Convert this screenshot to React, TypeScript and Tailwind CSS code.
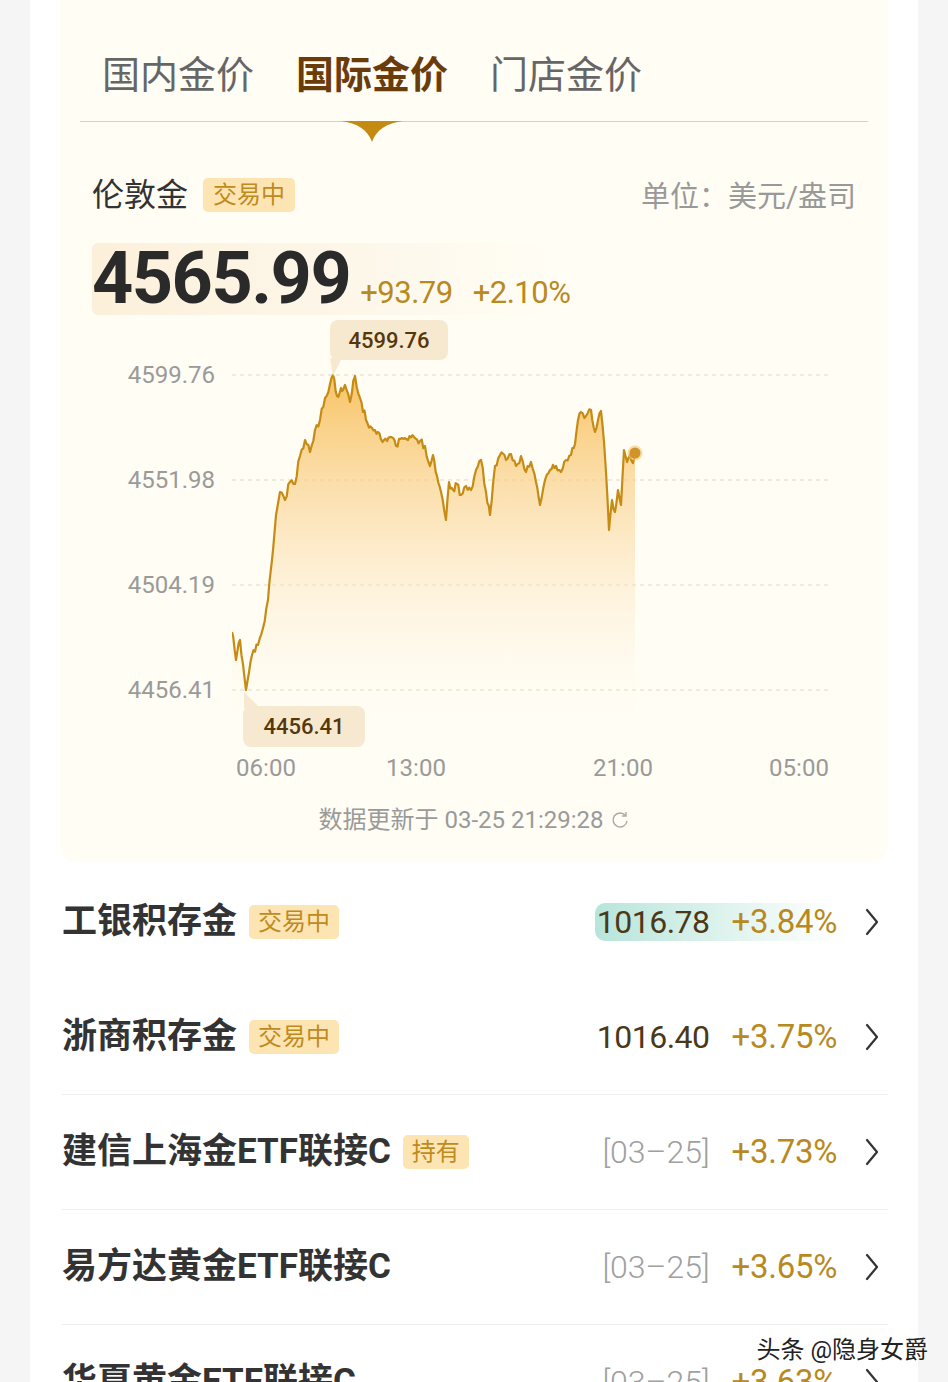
import React from "react";

const tabs = ["国内金价", "国际金价", "门店金价"];

interface Row {
  name: string;
  badge?: string;
  value?: string;
  date?: string;
  pct: string;
  hl?: boolean;
}

const rows: Row[] = [
  { name: "工银积存金", badge: "交易中", value: "1016.78", pct: "+3.84%", hl: true },
  { name: "浙商积存金", badge: "交易中", value: "1016.40", pct: "+3.75%" },
  { name: "建信上海金ETF联接C", badge: "持有", date: "[03–25]", pct: "+3.73%" },
  { name: "易方达黄金ETF联接C", date: "[03–25]", pct: "+3.65%" },
  { name: "华夏黄金ETF联接C", date: "[03–25]", pct: "+3.63%" },
];

// rough shape of the intraday line, in page coordinates
const keys: [number, number][] = [
  [232, 632], [236, 660], [240, 640], [246, 690], [252, 655], [258, 645], [263, 628],
  [268, 600], [272, 560], [276, 515], [280, 492], [285, 500], [290, 482], [295, 484],
  [300, 456], [305, 440], [310, 452], [315, 430], [320, 420], [325, 398], [330, 384],
  [333, 375], [337, 396], [341, 388], [345, 385], [350, 402], [355, 376], [360, 398],
  [366, 420], [372, 428], [378, 432], [384, 440], [390, 437], [396, 446], [402, 438],
  [408, 440], [414, 437], [420, 441], [425, 446], [430, 466], [433, 455], [437, 476],
  [441, 492], [446, 520], [449, 482], [453, 490], [457, 484], [461, 495], [466, 486],
  [471, 490], [476, 470], [481, 460], [486, 492], [490, 515], [495, 466], [500, 455],
  [506, 460], [511, 454], [516, 466], [521, 456], [526, 472], [531, 462], [536, 482],
  [540, 505], [545, 480], [550, 470], [556, 466], [561, 472], [566, 460], [571, 455],
  [575, 444], [578, 420], [581, 412], [586, 416], [591, 410], [595, 432], [598, 420],
  [601, 411], [604, 442], [606, 472], [609, 530], [612, 500], [615, 512], [618, 490],
  [621, 505], [624, 450], [627, 462], [630, 455], [633, 463], [635, 453],
];

function buildLine() {
  let seed = 11;
  const rnd = () => {
    seed = (seed * 16807) % 2147483647;
    return seed / 2147483647;
  };
  const pts: [number, number][] = [];
  for (let i = 0; i < keys.length - 1; i++) {
    const [x0, y0] = keys[i];
    const [x1, y1] = keys[i + 1];
    const steps = Math.max(1, Math.round((x1 - x0) / 1.5));
    for (let s = 0; s < steps; s++) {
      const t = s / steps;
      const j = s === 0 ? 0 : (rnd() - 0.5) * 8;
      const y = Math.min(690, Math.max(375, y0 + (y1 - y0) * t + j));
      pts.push([x0 + (x1 - x0) * t, y]);
    }
  }
  pts.push(keys[keys.length - 1]);
  return pts;
}

const linePts = buildLine();
const linePath = linePts.map((p, i) => `${i ? "L" : "M"}${p[0].toFixed(1)},${p[1].toFixed(1)}`).join(" ");
const areaPath = `${linePath} L635,720 L232,720 Z`;

const gridYs = [375, 480, 585, 690];

const Badge = ({ text }: { text: string }) => (
  <span className="ml-[12px] flex h-[34px] items-center rounded-[5px] bg-[#fde5b3] px-[9px] text-[24px] font-normal leading-none text-[#bf8a1e]">
    {text}
  </span>
);

const Chevron = () => (
  <svg width="16" height="30" viewBox="0 0 16 30" className="ml-[27px]">
    <path d="M3 3 L13 15 L3 27" fill="none" stroke="#333" strokeWidth="2.2" strokeLinecap="round" strokeLinejoin="round" />
  </svg>
);

export default function App() {
  return (
    <div className="relative h-[1382px] overflow-hidden bg-[#f5f5f5] font-['Roboto','Noto_Sans_CJK_SC',sans-serif]">
      <div className="mx-[30px] h-full bg-white">
        {/* gold panel */}
        <div className="mx-[30px] rounded-b-[16px] bg-[#fffdf4] pb-[28px]">
          <div className="px-[20px]">
            <div className="flex gap-[42px] border-b border-[#ddd3ad] pl-[22px] pt-[50px] pb-[21px]">
              {tabs.map((t, i) => (
                <div
                  key={t}
                  className={
                    i === 1
                      ? "relative text-[38px] font-bold leading-[50px] text-[#6b3c0b]"
                      : "relative text-[38px] leading-[50px] text-[#666]"
                  }
                >
                  {t}
                  {i === 1 && (
                    <svg
                      width="62"
                      height="22"
                      viewBox="0 0 62 22"
                      className="absolute left-1/2 top-[71px] -translate-x-1/2"
                    >
                      <path d="M0 0 H62 C46 2 35 9 31 21 C27 9 16 2 0 0 Z" fill="#c48a12" />
                    </svg>
                  )}
                </div>
              ))}
            </div>
          </div>

          <div className="px-[32px]">
            <div className="mt-[56px] flex h-[34px] items-center justify-between">
              <div className="flex items-center">
                <span className="text-[32px] leading-[34px] text-[#333]">伦敦金</span>
                <span className="ml-[15px] flex h-[34px] items-center rounded-[5px] bg-[#fde5b3] px-[10px] text-[24px] leading-none text-[#bf8a1e]">
                  交易中
                </span>
              </div>
              <span className="mt-[4px] text-[29px] leading-[34px] text-[#999]">单位：美元/盎司</span>
            </div>

            <div className="mt-[31px] flex h-[72px] w-[455px] items-baseline rounded-[6px] bg-linear-to-r from-[#fcf0da] via-[#fdf6e8] to-transparent">
              <span className="text-[72px] font-bold leading-[72px] tracking-[-1.5px] text-[#2a2a2a]">4565.99</span>
              <span className="ml-[10px] text-[31px] tracking-[-0.5px] text-[#b8891e]">+93.79</span>
              <span className="ml-[20px] text-[31px] tracking-[-0.5px] text-[#b8891e]">+2.10%</span>
            </div>

            {/* chart */}
            <div className="relative mt-[5px] flex h-[430px]">
              <div className="flex w-[123px] flex-col items-end gap-[75px] pt-[40px] text-[24px] leading-[30px] text-[#9a9a9a]">
                <span className="h-[30px]">4599.76</span>
                <span className="h-[30px]">4551.98</span>
                <span className="h-[30px]">4504.19</span>
                <span className="h-[30px]">4456.41</span>
              </div>
              <svg width="598" height="430" viewBox="232 320 598 430" className="ml-[17px]">
                <defs>
                  <linearGradient id="fill" x1="0" y1="375" x2="0" y2="720" gradientUnits="userSpaceOnUse">
                    <stop offset="0" stopColor="#f7bd55" stopOpacity="0.9" />
                    <stop offset="0.45" stopColor="#fbd9a0" stopOpacity="0.6" />
                    <stop offset="1" stopColor="#fff8ea" stopOpacity="0" />
                  </linearGradient>
                </defs>
                {gridYs.map((y) => (
                  <line key={y} x1="232" x2="830" y1={y} y2={y} stroke="#ece5d2" strokeWidth="1.5" strokeDasharray="4 4" />
                ))}
                <path d={areaPath} fill="url(#fill)" />
                <path d={linePath} fill="none" stroke="#c68b14" strokeWidth="2.2" strokeLinejoin="round" />
                <polygon points="330,358 342,358 333,376" fill="#f7e9cf" />
                <polygon points="244,692 244,708 260,708" fill="#f7e9cf" />
                <circle cx="635" cy="453" r="7.5" fill="#f3c877" opacity="0.6" />
                <circle cx="635" cy="453" r="5.5" fill="#cf952a" />
              </svg>
              <div className="absolute left-[238px] top-0 flex h-[40px] w-[118px] items-center justify-center rounded-[8px] bg-[#f7e9cf] text-[22px] font-medium text-[#55370c]">
                4599.76
              </div>
              <div className="absolute left-[151px] top-[386px] flex h-[41px] w-[122px] items-center justify-center rounded-[8px] bg-[#f7e9cf] text-[22px] font-medium text-[#55370c]">
                4456.41
              </div>
            </div>

            <div className="mt-[3px] flex h-[30px] pl-[140px] text-[24px] leading-[30px] text-[#9a9a9a]">
              <span className="ml-[2px] w-[64px] text-center">06:00</span>
              <span className="ml-[86px] w-[64px] text-center">13:00</span>
              <span className="ml-[143px] w-[64px] text-center">21:00</span>
              <span className="ml-[112px] w-[64px] text-center">05:00</span>
            </div>
          </div>

          <div className="mt-[23px] flex h-[28px] items-center justify-center text-[24px] leading-[28px] text-[#9a9a9a]">
            <span>数据更新于 03-25 21:29:28</span>
            <svg width="20" height="20" viewBox="0 0 20 20" className="ml-[6px]">
              <path d="M15.5 5.5 A7 7 0 1 0 17 11" fill="none" stroke="#aaa" strokeWidth="1.5" />
              <path d="M16 2 L16 6 L12 6" fill="none" stroke="#aaa" strokeWidth="1.5" />
            </svg>
          </div>
        </div>

        {/* list */}
        <div className="ml-[32px] mr-[30px] mt-[2px]">
          {rows.map((r, i) => (
            <div
              key={r.name}
              className={
                i >= 2
                  ? "flex h-[115px] items-center justify-between border-t border-[#eeeeee] pr-[8px]"
                  : "flex h-[115px] items-center justify-between pr-[8px]"
              }
            >
              <div className="flex items-center">
                <span className="text-[35px] font-bold leading-[40px] text-[#333]">{r.name}</span>
                {r.badge && <Badge text={r.badge} />}
              </div>
              <div className="flex items-center">
                <div
                  className={
                    r.hl
                      ? "flex h-[38px] items-center rounded-[10px] bg-linear-to-r from-[#b7e5db] via-[#dcf2ec] to-transparent pl-[2px]"
                      : "flex h-[38px] items-center pl-[2px]"
                  }
                >
                  {r.value && (
                    <span className="text-[32px] tracking-[-0.5px] text-[#4a3818]">{r.value}</span>
                  )}
                  {r.date && <span className="text-[32px] font-light text-[#a0a0a0]">{r.date}</span>}
                  <span className="ml-[22px] text-[33px] tracking-[-0.3px] text-[#b8891e]">{r.pct}</span>
                </div>
                <Chevron />
              </div>
            </div>
          ))}
        </div>
      </div>

      <div className="absolute bottom-[17px] right-[20px] text-[24px] leading-[30px] text-[#222] [text-shadow:0_0_3px_#fff]">
        头条 @隐身女爵
      </div>
    </div>
  );
}
